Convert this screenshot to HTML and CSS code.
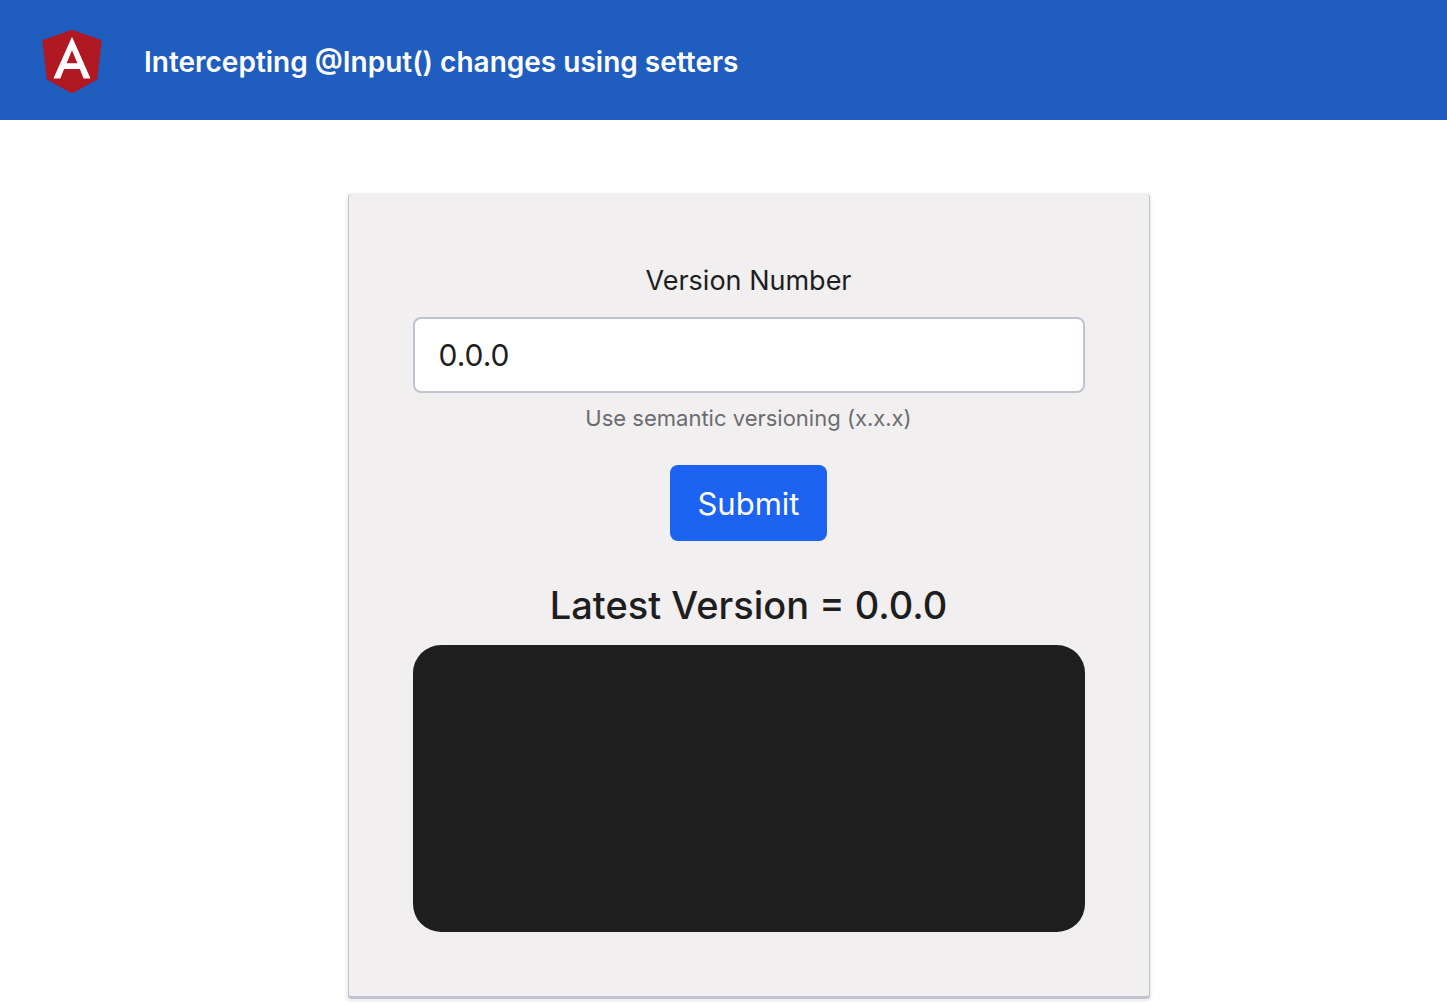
FILE: index.html
```html
<!DOCTYPE html>
<html lang="en">
<head>
<meta charset="utf-8">
<meta name="viewport" content="width=device-width, initial-scale=1">
<title>Intercepting @Input() changes using setters</title>
<link rel="stylesheet" href="styles.css">
</head>
<body>
<header class="toolbar">
  <svg class="logo" viewBox="31 23 188 204" role="img" aria-label="Angular logo">
    <path fill="#b11822" d="M125 30 31.9 63.2l14.2 123.1L125 230l78.9-43.7 14.2-123.1z"/>
    <path fill="#fff" d="M125 52.1 66.8 182.6h21.7l11.7-29.2h49.4l11.7 29.2H183L125 52.1zm17 83.3h-34l17-40.9 17 40.9z"/>
  </svg>
  <span class="title">Intercepting @Input() changes using setters</span>
</header>
<main class="content">
  <section class="card">
    <form class="version-form">
      <label class="label" for="version">Version Number</label>
      <input class="field" id="version" type="text" value="0.0.0" aria-describedby="version-help">
      <small class="help" id="version-help">Use semantic versioning (x.x.x)</small>
      <button class="submit" type="button">Submit</button>
    </form>
    <h1 class="latest">Latest Version = 0.0.0</h1>
    <div class="log"></div>
  </section>
</main>
</body>
</html>
```

FILE: styles.css
```css
* { box-sizing: border-box; }

body {
  margin: 0;
  background: #fff;
  color: #1e1e20;
  font-family: Inter, "Liberation Sans", sans-serif;
}

.toolbar {
  display: flex;
  align-items: center;
  gap: 42px;
  height: 120px;
  padding: 0 42px;
  background: #1f5dbe;
  color: #fff;
}

.logo {
  width: 60px;
  height: 66px;
}

.title {
  padding-top: 4px;
  font-size: 28px;
  font-weight: 600;
  line-height: 36px;
}

.content {
  padding: 74px 32px 6px 82px;
}

.card {
  max-width: 802px;
  margin: 0 auto;
  padding: 66px 64px 64px;
  border: 1px solid #bfc2cf;
  border-top: 0;
  border-bottom-width: 3px;
  border-radius: 4px;
  background: #f1eff0;
  box-shadow: 0 1px 2px 2px #f1eff0;
  text-align: center;
}

.version-form {
  display: flex;
  flex-direction: column;
  align-items: center;
}

.label {
  font-size: 27px;
  line-height: 42px;
}

.field {
  width: 100%;
  height: 76px;
  margin-top: 15px;
  padding: 0 24px;
  border: 2px solid #bfc2cf;
  border-radius: 8px;
  background: #fff;
  color: #1e1e20;
  font: 30px/48px Inter, "Liberation Sans", sans-serif;
}

.help {
  margin-top: 7px;
  color: #6b6c70;
  font-size: 22px;
  line-height: 36px;
}

.submit {
  height: 76px;
  margin-top: 29px;
  padding: 2px 27px 0;
  border: 0;
  border-radius: 8px;
  background: #1c63f2;
  color: #fff;
  font: 31px/48px Inter, "Liberation Sans", sans-serif;
}

.latest {
  margin: 40px 0 16px;
  font-size: 38px;
  font-weight: 500;
  line-height: 48px;
}

.log {
  height: 287px;
  border-radius: 28px;
  background: #1e1e1e;
}
```
